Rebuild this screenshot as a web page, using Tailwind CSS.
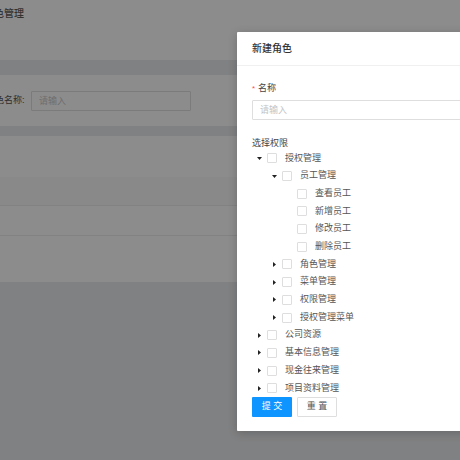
<!DOCTYPE html>
<html lang="zh-CN">
<head>
  <meta charset="UTF-8" />
  <title>角色管理</title>
  <script src="https://cdn.jsdelivr.net/npm/@tailwindcss/browser@4"></script>
</head>
<body class="relative w-[460px] h-[460px] overflow-hidden bg-[#808182] font-['Liberation_Sans','Noto_Sans_CJK_SC',sans-serif]">
  <!-- page behind the mask -->
  <div class="flex flex-col">
    <div class="h-[60px] bg-[#8c8c8c] pt-[7px] -ml-[16px] text-[10px] leading-[13px] font-medium text-[#333]">
      <span>角色管理</span>
    </div>
    <div class="h-[15px]"></div>
    <div class="h-[51px] bg-[#8c8c8c] flex items-center -ml-[14px]">
      <span class="text-[9px] text-[#2e2e2e] w-[45px] whitespace-nowrap">角色名称:</span>
      <div class="w-[160px] h-[20px] border border-[#7b7b7b] rounded-[1px] pl-[7px] text-[9px] leading-[18px] text-[#6e6e6e]">请输入</div>
    </div>
    <div class="h-[10px]"></div>
    <div class="h-[41px] bg-[#8c8c8c]"></div>
    <div class="h-[29px] bg-[#898989] border-b border-[#828282]"></div>
    <div class="h-[30px] bg-[#8c8c8c] border-b border-[#828282]"></div>
    <div class="h-[46px] bg-[#8c8c8c]"></div>
  </div>

  <!-- modal -->
  <div class="absolute left-[237px] top-[32px] w-[360px] h-[399px] bg-white rounded-[1px] shadow-[0_2px_10px_rgba(0,0,0,0.2)]">
    <div class="h-[34px] border-b border-[#f0f0f0] pl-[15px] text-[10px] leading-[33px] font-medium text-[#333]">新建角色</div>
    <div class="pl-[15px] pt-[16px]">
      <div class="h-[14px] flex items-center text-[9px] text-[#444]">
        <span class="text-[#ff4d4f] w-[6px] text-[8px]">*</span>名称
      </div>
      <div class="mt-[4px] w-[300px] h-[20px] border border-[#dedede] rounded-[1px] pl-[7px] text-[9px] leading-[18px] text-[#c4c4c4]">请输入</div>
      <div class="mt-[17px] h-[14px] flex items-center text-[9px] text-[#444]">选择权限</div>

      <div class="-mt-[1.5px] flex flex-col text-[9px] text-[#555]">
        <div class="h-[17.7px] flex items-center pl-[5px]">
          <svg class="w-[5px] h-[5px] mr-[5px]" viewBox="0 0 5 5"><path d="M0 1h5L2.5 4z" fill="#222"/></svg>
          <span class="w-[10px] h-[10px] border border-[#dedede] rounded-[1px] mr-[8px]"></span>授权管理
        </div>
        <div class="h-[17.7px] flex items-center pl-[20px]">
          <svg class="w-[5px] h-[5px] mr-[5px]" viewBox="0 0 5 5"><path d="M0 1h5L2.5 4z" fill="#222"/></svg>
          <span class="w-[10px] h-[10px] border border-[#dedede] rounded-[1px] mr-[8px]"></span>员工管理
        </div>
        <div class="h-[17.7px] flex items-center pl-[45px]">
          <span class="w-[10px] h-[10px] border border-[#dedede] rounded-[1px] mr-[8px]"></span>查看员工
        </div>
        <div class="h-[17.7px] flex items-center pl-[45px]">
          <span class="w-[10px] h-[10px] border border-[#dedede] rounded-[1px] mr-[8px]"></span>新增员工
        </div>
        <div class="h-[17.7px] flex items-center pl-[45px]">
          <span class="w-[10px] h-[10px] border border-[#dedede] rounded-[1px] mr-[8px]"></span>修改员工
        </div>
        <div class="h-[17.7px] flex items-center pl-[45px]">
          <span class="w-[10px] h-[10px] border border-[#dedede] rounded-[1px] mr-[8px]"></span>删除员工
        </div>
        <div class="h-[17.7px] flex items-center pl-[20px]">
          <svg class="w-[5px] h-[5px] mr-[5px]" viewBox="0 0 5 5"><path d="M1 0v5l3-2.5z" fill="#222"/></svg>
          <span class="w-[10px] h-[10px] border border-[#dedede] rounded-[1px] mr-[8px]"></span>角色管理
        </div>
        <div class="h-[17.7px] flex items-center pl-[20px]">
          <svg class="w-[5px] h-[5px] mr-[5px]" viewBox="0 0 5 5"><path d="M1 0v5l3-2.5z" fill="#222"/></svg>
          <span class="w-[10px] h-[10px] border border-[#dedede] rounded-[1px] mr-[8px]"></span>菜单管理
        </div>
        <div class="h-[17.7px] flex items-center pl-[20px]">
          <svg class="w-[5px] h-[5px] mr-[5px]" viewBox="0 0 5 5"><path d="M1 0v5l3-2.5z" fill="#222"/></svg>
          <span class="w-[10px] h-[10px] border border-[#dedede] rounded-[1px] mr-[8px]"></span>权限管理
        </div>
        <div class="h-[17.7px] flex items-center pl-[20px]">
          <svg class="w-[5px] h-[5px] mr-[5px]" viewBox="0 0 5 5"><path d="M1 0v5l3-2.5z" fill="#222"/></svg>
          <span class="w-[10px] h-[10px] border border-[#dedede] rounded-[1px] mr-[8px]"></span>授权管理菜单
        </div>
        <div class="h-[17.7px] flex items-center pl-[5px]">
          <svg class="w-[5px] h-[5px] mr-[5px]" viewBox="0 0 5 5"><path d="M1 0v5l3-2.5z" fill="#222"/></svg>
          <span class="w-[10px] h-[10px] border border-[#dedede] rounded-[1px] mr-[8px]"></span>公司资源
        </div>
        <div class="h-[17.7px] flex items-center pl-[5px]">
          <svg class="w-[5px] h-[5px] mr-[5px]" viewBox="0 0 5 5"><path d="M1 0v5l3-2.5z" fill="#222"/></svg>
          <span class="w-[10px] h-[10px] border border-[#dedede] rounded-[1px] mr-[8px]"></span>基本信息管理
        </div>
        <div class="h-[17.7px] flex items-center pl-[5px]">
          <svg class="w-[5px] h-[5px] mr-[5px]" viewBox="0 0 5 5"><path d="M1 0v5l3-2.5z" fill="#222"/></svg>
          <span class="w-[10px] h-[10px] border border-[#dedede] rounded-[1px] mr-[8px]"></span>现金往来管理
        </div>
        <div class="h-[17.7px] flex items-center pl-[5px]">
          <svg class="w-[5px] h-[5px] mr-[5px]" viewBox="0 0 5 5"><path d="M1 0v5l3-2.5z" fill="#222"/></svg>
          <span class="w-[10px] h-[10px] border border-[#dedede] rounded-[1px] mr-[8px]"></span>项目资料管理
        </div>
      </div>

      <div class="-mt-[0.5px] flex gap-[5px] text-[9px]">
        <div class="w-[40px] h-[20px] bg-[#0f95ff] rounded-[1px] text-white flex items-center justify-center">提 交</div>
        <div class="w-[40px] h-[20px] border border-[#dedede] rounded-[1px] text-[#555] flex items-center justify-center">重 置</div>
      </div>
    </div>
  </div>
</body>
</html>
